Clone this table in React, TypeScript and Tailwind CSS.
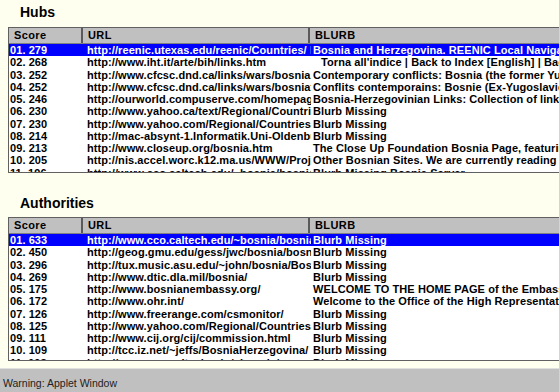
import React from "react";

type Row = { score: string; url: string; blurb: string; indent?: boolean };

const hubs: Row[] = [
  { score: "01. 279", url: "http://reenic.utexas.edu/reenic/Countries/ Bosnia/bosnia.html", blurb: "Bosnia and Herzegovina. REENIC Local Navigation Tools" },
  { score: "02. 268", url: "http://www.iht.it/arte/bih/links.htm", blurb: "Torna all'indice | Back to Index [English] | Back to Index", indent: true },
  { score: "03. 252", url: "http://www.cfcsc.dnd.ca/links/wars/bosnia.html", blurb: "Contemporary conflicts: Bosnia (the former Yugoslavia)" },
  { score: "04. 252", url: "http://www.cfcsc.dnd.ca/links/wars/bosniaf.html", blurb: "Conflits contemporains: Bosnie (Ex-Yugoslavie)" },
  { score: "05. 246", url: "http://ourworld.compuserve.com/homepages/bosnia/", blurb: "Bosnia-Herzegovinian Links: Collection of links" },
  { score: "06. 230", url: "http://www.yahoo.ca/text/Regional/Countries/Bosnia/", blurb: "Blurb Missing" },
  { score: "07. 230", url: "http://www.yahoo.com/Regional/Countries/Bosnia/", blurb: "Blurb Missing" },
  { score: "08. 214", url: "http://mac-absynt-1.Informatik.Uni-Oldenburg.DE/", blurb: "Blurb Missing" },
  { score: "09. 213", url: "http://www.closeup.org/bosnia.htm", blurb: "The Close Up Foundation Bosnia Page, featuring" },
  { score: "10. 205", url: "http://nis.accel.worc.k12.ma.us/WWW/Projects/", blurb: "Other Bosnian Sites. We are currently reading" },
  { score: "11. 196", url: "http://www.cco.caltech.edu/~bosnia/bosnia.html", blurb: "Blurb Missing    Bosnia Server" },
];

const authorities: Row[] = [
  { score: "01. 633", url: "http://www.cco.caltech.edu/~bosnia/bosnia.html", blurb: "Blurb Missing" },
  { score: "02. 450", url: "http://geog.gmu.edu/gess/jwc/bosnia/bosnia.html", blurb: "Blurb Missing" },
  { score: "03. 296", url: "http://tux.music.asu.edu/~john/bosnia/Bosnia.html", blurb: "Blurb Missing" },
  { score: "04. 269", url: "http://www.dtic.dla.mil/bosnia/", blurb: "Blurb Missing" },
  { score: "05. 175", url: "http://www.bosnianembassy.org/", blurb: "WELCOME TO THE HOME PAGE of the Embassy of Bosnia" },
  { score: "06. 172", url: "http://www.ohr.int/", blurb: "Welcome to the Office of the High Representative" },
  { score: "07. 126", url: "http://www.freerange.com/csmonitor/", blurb: "Blurb Missing" },
  { score: "08. 125", url: "http://www.yahoo.com/Regional/Countries/Bosnia/", blurb: "Blurb Missing" },
  { score: "09. 111", url: "http://www.cij.org/cij/commission.html", blurb: "Blurb Missing" },
  { score: "10. 109", url: "http://tcc.iz.net/~jeffs/BosniaHerzegovina/", blurb: "Blurb Missing" },
  { score: "11. 098", url: "http://www.cco.caltech.edu/~bosnia/", blurb: "Blurb Missing" },
];

function ResultTable({ rows, bodyHeight }: { rows: Row[]; bodyHeight: string }) {
  return (
    <div className="ml-[8px] w-[620px] border border-[#606060] bg-white">
      {/* Column header */}
      <div className="flex h-[16px] bg-[#c0c0c0] border-b border-[#808080] text-[11px] font-bold tracking-[0.4px] leading-[15px] text-black">
        <div className="w-[74px] pl-[5px] border-r-2 border-[#5a5a5a]">Score</div>
        <div className="w-[227px] pl-[5px] border-r-2 border-[#5a5a5a]">URL</div>
        <div className="flex-1 pl-[5px]">BLURB</div>
      </div>
      {/* Rows */}
      <div className={`overflow-hidden ${bodyHeight}`}>
        {rows.map((r, i) => (
          <div
            key={r.score}
            className={`flex h-[12.25px] text-[11px] font-bold tracking-[0.08px] leading-[12.25px] whitespace-nowrap ${
              i === 0 ? "bg-[#0000ff] text-white" : "text-black"
            }`}
          >
            <div className="w-[74px] pl-[1px] overflow-hidden">{r.score}</div>
            <div className="w-[228px] pl-[4px] overflow-hidden">{r.url}</div>
            <div className={`flex-1 overflow-hidden ${r.indent ? "pl-[10px]" : "pl-[2px]"}`}>
              {r.blurb}
            </div>
          </div>
        ))}
      </div>
    </div>
  );
}

export default function App() {
  return (
    <div
      className="w-[559px] h-[392px] overflow-hidden bg-[#fffff0] flex flex-col"
      style={{ fontFamily: '"Liberation Sans", Arial, sans-serif' }}
    >
      <div className="h-[27px] pt-[4px] pl-[20px] text-[14px] font-bold leading-[16px] text-black">
        Hubs
      </div>
      <ResultTable rows={hubs} bodyHeight="h-[128px]" />

      <div className="mt-[17px] h-[27px] pt-[5px] pl-[20px] text-[14px] font-bold leading-[16px] text-black">
        Authorities
      </div>
      <ResultTable rows={authorities} bodyHeight="h-[126px]" />

      <div className="flex-1" />
      {/* Applet warning bar */}
      <div className="h-[24px] bg-[#c0c0c0] border-t border-[#e0e0e0] flex items-end pb-[2px] pl-[3px] text-[10.5px] leading-[14px] text-[#202020]">
        Warning: Applet Window
      </div>
    </div>
  );
}
